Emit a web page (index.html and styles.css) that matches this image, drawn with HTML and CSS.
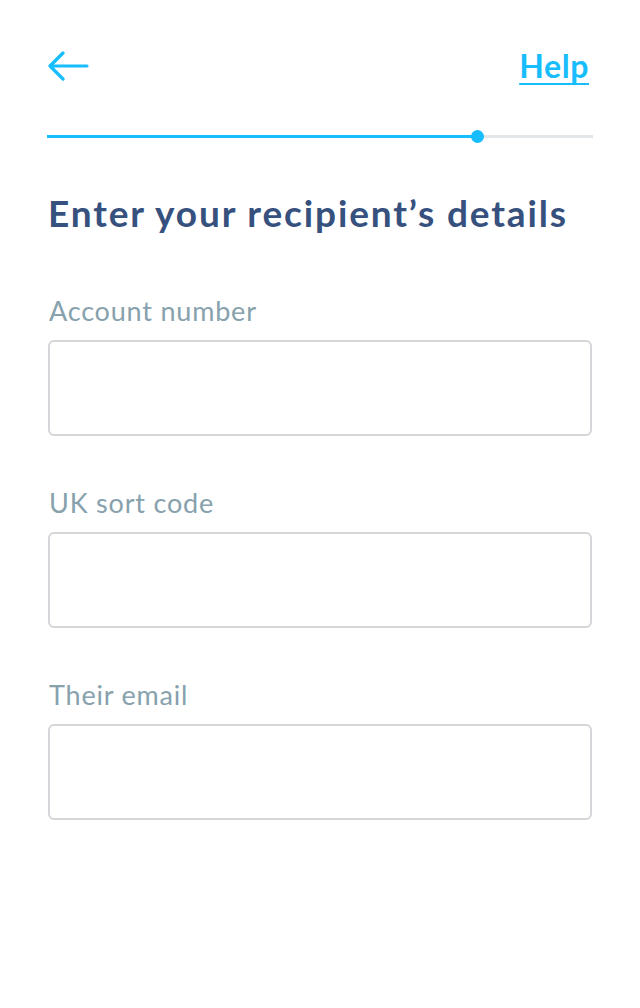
FILE: index.html
```html
<!DOCTYPE html>
<html lang="en">
<head>
<meta charset="utf-8">
<link rel="stylesheet" href="styles.css">
</head>
<body>
<div class="page">
  <header class="topbar">
    <a class="back" href="#" aria-label="Back">
      <svg width="42" height="30" viewBox="0 0 42 30"><path d="M40 15H3M16 2L3 15l13 13" fill="none" stroke="#17bdfc" stroke-width="3.2" stroke-linecap="round" stroke-linejoin="round"/></svg>
    </a>
    <a class="help" href="#">Help</a>
  </header>
  <div class="progress">
    <div class="progress-fill" style="width:78.7%"></div>
    <div class="progress-dot" style="left:78.7%"></div>
  </div>
  <h1 class="title">Enter your recipient’s details</h1>
  <form class="form">
    <label class="field">
      <span class="label">Account number</span>
      <input class="input" type="text">
    </label>
    <label class="field">
      <span class="label">UK sort code</span>
      <input class="input" type="text">
    </label>
    <label class="field">
      <span class="label">Their email</span>
      <input class="input" type="email">
    </label>
  </form>
</div>
</body>
</html>
```

FILE: styles.css
```css
html, body {
  margin: 0;
  padding: 0;
  background: #fff;
}
body {
  font-family: Lato, "Noto Sans", "Liberation Sans", sans-serif;
}
.page {
  padding: 0 48px;
}
.topbar {
  display: flex;
  justify-content: space-between;
  align-items: center;
  height: 36px;
  margin-top: 48px;
}
.back {
  display: block;
  width: 42px;
  height: 30px;
  margin-left: -1px;
}
.back svg { display: block; }
.help {
  color: #17bdfc;
  font-size: 32px;
  line-height: 36px;
  font-weight: 700;
  letter-spacing: 0.6px;
  text-decoration: underline;
  text-decoration-thickness: 2px;
  text-underline-offset: 5px;
  margin-right: 3px;
}
.progress {
  position: relative;
  height: 3px;
  background: #e3e6e8;
  margin: 51px -1px 0 -1px;
}
.progress-fill {
  height: 3px;
  background: #17bdfc;
}
.progress-dot {
  position: absolute;
  top: -5px;
  width: 13px;
  height: 13px;
  margin-left: -6px;
  border-radius: 50%;
  background: #17bdfc;
}
.title {
  margin: 51px 0 0 0;
  font-size: 37px;
  font-weight: 700;
  color: #37517e;
  line-height: 48px;
  letter-spacing: 1.85px;
  white-space: nowrap;
}
.form {
  display: flex;
  flex-direction: column;
  gap: 49px;
  margin-top: 56px;
}
.field {
  display: flex;
  flex-direction: column;
  gap: 11px;
}
.label {
  font-size: 27px;
  line-height: 36px;
  letter-spacing: 0.8px;
  color: #87a1ad;
  margin-left: 1px;
}
.input {
  box-sizing: border-box;
  width: 544px;
  height: 96px;
  border: 2px solid #d5d5da;
  border-radius: 6px;
  background: #fff;
  font: inherit;
  outline: none;
}
```
